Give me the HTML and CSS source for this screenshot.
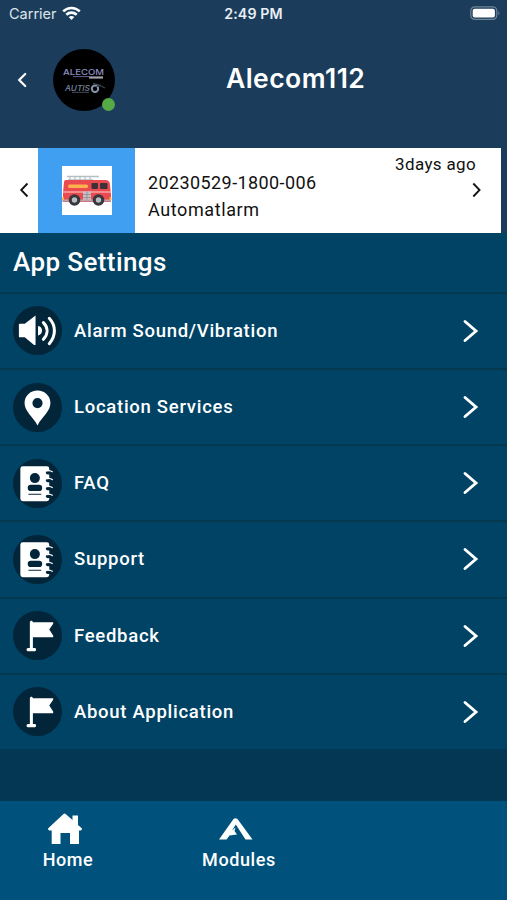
FILE: index.html
```html
<!DOCTYPE html>
<html lang="en">

<head>
    <meta charset="UTF-8">
    <meta name="viewport" content="width=device-width, initial-scale=1.0">
    <title>Alecom112</title>
    <link rel="stylesheet" href="styles.css">
</head>

<body>
    <!-- shared icons -->
    <svg class="defs" width="0" height="0">
        <symbol id="arrow" viewBox="0 0 18 24">
            <path d="M3 2.5L14 12L3 21.5" fill="none" stroke="currentColor" stroke-width="2.9" stroke-linecap="round" stroke-linejoin="miter" />
        </symbol>
        <symbol id="book" viewBox="0 0 50 50">
            <rect x="7.5" y="7.5" width="29.5" height="35.5" rx="2.5" fill="#fff" />
            <circle cx="22.3" cy="19.5" r="5.1" fill="#02253a" />
            <rect x="15" y="26.3" width="14.8" height="6.4" rx="3.2" fill="#02253a" />
            <path d="M15.8 36H28.8" stroke="#02253a" stroke-width="1" />
            <g fill="#02253a">
                <ellipse cx="36.5" cy="14" rx="3" ry="1.8" />
                <ellipse cx="36.5" cy="22" rx="3" ry="1.8" />
                <ellipse cx="36.5" cy="30" rx="3" ry="1.8" />
                <ellipse cx="36.5" cy="38" rx="3" ry="1.8" />
            </g>
            <path d="M35 12.2Q37.5 11.2 40.5 13.3M35 20.2Q37.5 19.2 40.5 21.3M35 28.2Q37.5 27.2 40.5 29.3M35 36.2Q37.5 35.2 40.5 37.3" fill="none" stroke="#fff" stroke-width="1.3" />
        </symbol>
        <symbol id="flag" viewBox="0 0 50 50">
            <path d="M17.2 11.5C17.2 9.3 20.3 9.3 20.3 11.5H41V13L37 19L41 25V26.8H20.3V37.8H22.3C24 37.8 24 41 22.3 41H15.2C13.5 41 13.5 37.8 15.2 37.8H17.2Z" fill="#fff" />
        </symbol>
    </svg>

    <div class="header">
        <div class="status">
            <div class="carrier">
                <span>Carrier</span>
                <svg width="19" height="15" viewBox="0 0 19 15">
                    <g fill="none" stroke="#fff" stroke-width="2.6">
                        <path d="M1.2 5.4C6 .8 13 .8 17.8 5.4" />
                        <path d="M4.3 8.7C7.3 5.9 11.7 5.9 14.7 8.7" />
                    </g>
                    <path d="M6.7 11C8.4 9.6 10.6 9.6 12.3 11L9.5 14Z" fill="#fff" />
                </svg>
            </div>
            <span class="time">2:49 PM</span>
            <svg class="battery" width="31" height="15" viewBox="0 0 31 15">
                <rect x=".8" y=".8" width="26" height="12.6" rx="4" fill="none" stroke="#6f8598" stroke-width="1.2" />
                <rect x="2.7" y="2.7" width="22.2" height="8.8" rx="2" fill="#fff" />
                <path d="M28.4 5Q30.5 7 28.4 9.2Z" fill="#6f8598" />
            </svg>
        </div>
        <div class="profile">
            <svg class="back" width="11" height="16" viewBox="0 0 11 16">
                <path d="M9.2 2L3.2 8L9.2 14" fill="none" stroke="#fff" stroke-width="2.2" stroke-linecap="round" />
            </svg>
            <div class="avatar">
                <svg width="62" height="62" viewBox="0 0 62 62">
                    <text x="10" y="26" class="logo" textLength="41" lengthAdjust="spacingAndGlyphs">ALECOM</text>
                    <path d="M20 27.6H36" stroke="#5d6390" stroke-width="1" />
                    <path d="M36 28.5H50" stroke="#a3a3ad" stroke-width="2.2" />
                    <text x="12" y="42" class="logo small" textLength="25" lengthAdjust="spacingAndGlyphs">AUTIS</text>
                    <path d="M19 43.3H36" stroke="#444d5d" stroke-width="1" />
                    <circle cx="42" cy="39.8" r="3.2" fill="none" stroke="#8594ad" stroke-width="2" />
                    <path d="M40 34.5L45 35.5L52 39M43 38L48 36" fill="none" stroke="#39424d" stroke-width="1.3" />
                </svg>
                <span class="online"></span>
            </div>
            <h1>Alecom112</h1>
        </div>
    </div>

    <div class="alert">
        <div class="prev">
            <svg width="10" height="16" viewBox="0 0 10 16">
                <path d="M8.5 1.5L2.2 8L8.5 14.5" fill="none" stroke="#111" stroke-width="1.8" />
            </svg>
        </div>
        <div class="truck">
            <svg width="50" height="49" viewBox="0 0 50 49">
                <rect width="50" height="49" fill="#fff" />
                <path d="M5 10.5H37M6 14H31" stroke="#b5c0c4" stroke-width="1.7" />
                <path d="M8 10V14M13 10V14M18 10V14M23 10V14M28 10V14" stroke="#b5c0c4" stroke-width="1.2" />
                <path d="M2 16Q2 14 4 14H43Q48 14 48 19L49 29V36H1V27Z" fill="#ea4b50" />
                <path d="M1 26H49" stroke="#f7a4a4" stroke-width="1.6" />
                <rect x="6" y="18.5" width="20" height="3.5" rx="1.5" fill="#ffb14d" />
                <rect x="29.5" y="17" width="6.5" height="6" rx="1" fill="#3b3238" />
                <rect x="38" y="17" width="7.5" height="6" rx="1" fill="#3b3238" />
                <rect x="21" y="25.5" width="8" height="9" fill="#c8bfc4" />
                <path d="M21 28.5H29M21 31.5H29M25 25.5V34.5" stroke="#8f8990" stroke-width=".8" />
                <path d="M0 34.5H49" stroke="#bca4ab" stroke-width="1.8" />
                <circle cx="12.5" cy="34" r="5.8" fill="#39363c" />
                <circle cx="12.5" cy="34" r="2.7" fill="#b7bdc2" />
                <circle cx="36.5" cy="34" r="5.8" fill="#39363c" />
                <circle cx="36.5" cy="34" r="2.7" fill="#b7bdc2" />
                <path d="M1 31V34M48.5 31V34" stroke="#ffb14d" stroke-width="2" />
            </svg>
        </div>
        <div class="details">
            <div class="ago">3days ago</div>
            <div class="code">20230529-1800-006</div>
            <div class="name">Automatlarm</div>
        </div>
        <div class="next">
            <svg width="10" height="16" viewBox="0 0 10 16">
                <path d="M2.3 1.5L8.6 8L2.3 14.5" fill="none" stroke="#111" stroke-width="1.8" />
            </svg>
        </div>
    </div>

    <div class="settings">
        <h2>App Settings</h2>
        <div class="row">
            <svg class="icon" viewBox="0 0 50 50">
                <path d="M7 18H12L23 9.8V39.8H21.5L12 32H7Q6 32 6 31V19Q6 18 7 18Z" fill="#fff" />
                <path d="M25.5 20.5C31 21 31 29.5 25.5 30Z" fill="#fff" />
                <path d="M31 17C36 22 36 28.5 31 34M37 12.5C44 20 44 30.5 37 38.5" fill="none" stroke="#fff" stroke-width="3.1" stroke-linecap="round" />
            </svg>
            <span>Alarm Sound/Vibration</span>
            <svg class="go"><use href="#arrow" /></svg>
        </div>
        <div class="row">
            <svg class="icon" viewBox="0 0 50 50">
                <path d="M25 7.7C17.6 7.7 11.8 13.3 11.8 20.5C11.8 29 20 34 25 43.3C30 34 38.2 29 38.2 20.5C38.2 13.3 32.4 7.7 25 7.7ZM25 15.3A5.2 5.2 0 1 1 25 25.7A5.2 5.2 0 1 1 25 15.3Z" fill="#fff" />
            </svg>
            <span>Location Services</span>
            <svg class="go"><use href="#arrow" /></svg>
        </div>
        <div class="row">
            <svg class="icon"><use href="#book" /></svg>
            <span>FAQ</span>
            <svg class="go"><use href="#arrow" /></svg>
        </div>
        <div class="row">
            <svg class="icon"><use href="#book" /></svg>
            <span>Support</span>
            <svg class="go"><use href="#arrow" /></svg>
        </div>
        <div class="row">
            <svg class="icon"><use href="#flag" /></svg>
            <span>Feedback</span>
            <svg class="go"><use href="#arrow" /></svg>
        </div>
        <div class="row">
            <svg class="icon"><use href="#flag" /></svg>
            <span>About Application</span>
            <svg class="go"><use href="#arrow" /></svg>
        </div>
    </div>

    <div class="footer">
        <div class="tab home">
            <svg width="36" height="32" viewBox="0 0 36 32">
                <path d="M18 1.5L25.5 8V3.5H31V13L35 16.5Q35 18.5 33.5 18.5H32V32H23V21H13.5V32H4.7V18.5H2.5Q1 18.5 1 16.5L16.5 2Q17.3 1.3 18 1.5Z" fill="#fff" />
            </svg>
            <span>Home</span>
        </div>
        <div class="tab modules">
            <svg width="36" height="32" viewBox="0 0 36 32">
                <path d="M15.5 7Q17.5 5.3 19.5 7L34.5 27.5H27.5L17.8 12.5L14 18.5L17.5 15.5L16.5 19L19 22.5L11.5 23.5L8.5 27.5H1Z" fill="#fff" />
            </svg>
            <span>Modules</span>
        </div>
    </div>
</body>

</html>
```
FILE: styles.css
```css
* {
    box-sizing: border-box;
}

body {
    margin: 0;
    height: 900px;
    display: flex;
    flex-direction: column;
    overflow: hidden;
    background: #033753;
    color: white;
    font-family: Roboto, "Liberation Sans", sans-serif;
}

.defs {
    position: absolute;
}

.header {
    height: 147.5px;
    background: #1b3d5b;
    font-family: Inter, "Liberation Sans", sans-serif;
}

.status {
    display: grid;
    grid-template-columns: 1fr auto 1fr;
    align-items: center;
    height: 27px;
    padding: 0 6px 0 9px;
    font-size: 14.5px;
}

.carrier {
    display: flex;
    align-items: center;
    gap: 5px;
    color: #dde5ec;
}

.time {
    margin-right: 3px;
    font-weight: 600;
    font-size: 14.2px;
    color: #e9eff4;
    letter-spacing: 0.1px;
}

.battery {
    justify-self: end;
}

.profile {
    display: flex;
    padding: 22px 0 0 16px;
}

.back {
    margin-top: 23px;
}

.avatar {
    position: relative;
    width: 62px;
    height: 62px;
    margin-left: 26px;
    border-radius: 50%;
    background: #000;
}

.online {
    position: absolute;
    right: 0;
    bottom: 0;
    width: 13px;
    height: 13px;
    border-radius: 50%;
    background: #55aa46;
}

.logo {
    font-size: 8px;
    font-weight: 500;
    fill: #8b8fc0;
}

.small {
    font-size: 7px;
    font-style: italic;
    fill: #78849c;
}

h1 {
    margin: 13px 0 0 111px;
    font-size: 26.5px;
    line-height: 32px;
    font-weight: 600;
    letter-spacing: 0.45px;
}

.alert {
    display: flex;
    height: 85.5px;
    background: white;
    border-right: 6px solid #1b3d5b;
    color: #111;
}

.prev {
    display: flex;
    align-items: center;
    justify-content: flex-end;
    width: 38px;
    padding-right: 9px;
}

.truck {
    display: flex;
    align-items: center;
    justify-content: center;
    width: 97px;
    background: #409ff0;
}

.details {
    flex: 1;
    padding: 6px 0 0 13px;
    font-size: 18px;
    white-space: nowrap;
}

.ago {
    margin-right: -5px;
    text-align: right;
    font-size: 17px;
    line-height: 20px;
    letter-spacing: 0.35px;
}

.code {
    line-height: 17px;
    letter-spacing: 0.4px;
}

.name {
    margin-top: 7px;
    line-height: 24px;
    letter-spacing: 0.6px;
}

.next {
    display: flex;
    align-items: center;
    width: 30px;
}

.settings {
    background: #004365;
}

h2 {
    height: 58.8px;
    margin: 0;
    padding-left: 13px;
    font-size: 26px;
    line-height: 58px;
    font-weight: 500;
    letter-spacing: 0.4px;
}

.row {
    display: flex;
    align-items: center;
    height: 76.2px;
    padding: 0 27px 0 13px;
    border-top: 2px solid #03384f;
    font-size: 18.5px;
    font-weight: 500;
    letter-spacing: 0.72px;
}

.row span {
    flex: 1;
    margin-left: 12px;
}

.icon {
    width: 49px;
    height: 49px;
    border-radius: 50%;
    background: #02253a;
}

.go {
    width: 18px;
    height: 24px;
}

.footer {
    display: flex;
    height: 99px;
    margin-top: auto;
    padding-top: 11px;
    background: #00527c;
}

.tab {
    display: flex;
    flex-direction: column;
    align-items: center;
    font-size: 18px;
    font-weight: 500;
    letter-spacing: 0.6px;
}

.tab span {
    margin-top: 5px;
}

.home {
    width: 136px;
}

.home svg {
    margin-left: -6px;
}

.modules {
    width: 206px;
}

.modules svg {
    margin-left: -6px;
}
```
